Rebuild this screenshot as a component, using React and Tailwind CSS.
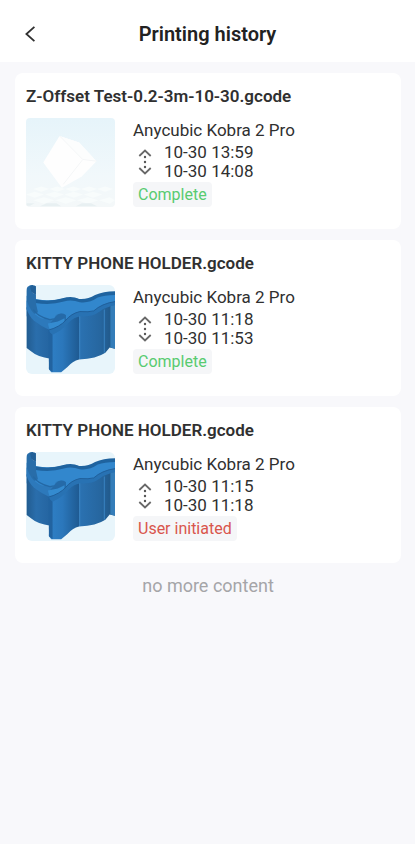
import { useId } from "react";

function CubeThumbnail() {
  const id = useId();
  return (
    <svg viewBox="18 18 268 268" className="size-[89px] shrink-0 rounded-sm" role="img" aria-label="Cube model">
      <defs>
        <linearGradient id={id} x1="0" y1="0" x2="0" y2="1">
          <stop offset="0" stopColor="#e6f4fa" />
          <stop offset="0.65" stopColor="#f1f8fb" />
          <stop offset="1" stopColor="#f4f8f9" />
        </linearGradient>
      </defs>
      <rect x="18" y="18" width="268" height="268" fill={`url(#${id})`} />
      <g fill="#f8fcfc">
        <path d="M40 232l24-8 24 8-24 8zM88 232l24-8 24 8-24 8zM136 232l24-8 24 8-24 8zM184 232l24-8 24 8-24 8zM232 232l24-8 24 8-24 8z" />
        <path d="M18 248l26-8 28 8-28 10zM76 248l28-8 28 8-28 10zM134 248l28-8 28 8-28 10zM192 248l28-8 28 8-28 10z" />
        <path d="M40 266l32-9 32 9-32 10zM106 266l32-9 32 9-32 10zM172 266l32-9 32 9-32 10zM238 266l32-9 16 9-16 10z" />
      </g>
      <g fill="#e8f0f2">
        <path d="M60 284l20-9h30l14 9zM168 284l18-9h28l18 9zM20 275h24l-14 7H18z" />
      </g>
      <path d="M119 72L178 92L230 148L186 194L126 228L70 152Z" fill="#fefefe" />
      <path d="M119 72L178 92L230 148L189 143Z" fill="#fcfdfd" />
      <path d="M119 72L189 143L230 148M189 143L130 218" fill="none" stroke="#f4f6f7" strokeWidth="3" />
    </svg>
  );
}

function HolderThumbnail() {
  const id = useId();
  return (
    <svg viewBox="18 16 268 268" className="size-[89px] shrink-0 rounded-md" role="img" aria-label="Phone holder model">
      <defs>
        <linearGradient id={`${id}left`} x1="0" y1="0" x2="1" y2="0">
          <stop offset="0" stopColor="#225c90" />
          <stop offset="0.4" stopColor="#2a6eac" />
          <stop offset="1" stopColor="#2464a0" />
        </linearGradient>
        <linearGradient id={`${id}front`} x1="0" y1="0" x2="1" y2="0">
          <stop offset="0" stopColor="#2f80c6" />
          <stop offset="0.45" stopColor="#2b77bb" />
          <stop offset="1" stopColor="#1e5a92" />
        </linearGradient>
        <linearGradient id={`${id}right`} x1="0" y1="0" x2="1" y2="0">
          <stop offset="0" stopColor="#2b72b2" />
          <stop offset="0.6" stopColor="#26669f" />
          <stop offset="1" stopColor="#1f5482" />
        </linearGradient>
      </defs>
      <rect x="18" y="16" width="268" height="268" fill="#e8f5fb" />
      <path d="M20 48L48 58Q90 66 135 56Q165 52 190 62Q215 58 240 44L286 38V90L180 130L95 160L20 110Z" fill="#3287cd" />
      <path d="M46 60Q90 68 128 56Q156 48 178 58Q204 60 226 46Q250 36 286 35V46Q254 46 234 54Q208 72 180 68Q154 58 132 66Q92 78 46 70Z" fill="#1f639f" />
      <path d="M20 16H40Q32 28 38 40L48 44V72L54 98L36 106L20 90Z" fill="#286da9" />
      <path d="M30 18Q40 14 48 20V44Q34 42 32 28Z" fill="#215f97" />
      <path d="M20 82Q32 112 54 128Q74 140 92 150V238Q52 232 34 216L20 206Z" fill={`url(#${id}left)`} />
      <path d="M20 62Q32 100 56 112Q74 122 102 120L108 106Q124 96 138 108V130L102 158L90 152Q62 140 42 124Q26 108 20 88Z" fill="#2d79bb" />
      <path d="M40 90Q54 112 90 120L102 118" fill="none" stroke="#2468a5" strokeWidth="4" />
      <path d="M106 112Q120 96 138 106V126Q122 142 98 148L92 130Z" fill="#256aa8" />
      <path d="M84 132L114 126L134 116V130L106 148H88Z" fill="#348bd0" />
      <path d="M90 156Q118 148 136 130Q154 106 178 102V240Q158 244 142 264L124 279H94L87 270Z" fill={`url(#${id}front)`} />
      <path d="M86 154L98 164V278L87 270Z" fill="#2263a0" />
      <path d="M178 100L220 98Q248 76 286 70V208L270 204L257 220Q230 238 178 240Z" fill={`url(#${id}right)`} />
      <path d="M86 152Q120 142 138 122Q154 102 180 96Q208 98 222 94Q246 72 286 66V78Q258 82 240 96Q216 114 184 110Q162 112 146 130Q126 154 98 166Z" fill="#2872b3" />
      <path d="M86 152Q120 142 138 122Q154 102 180 96Q208 98 222 94Q246 72 286 66" fill="none" stroke="#205f9b" strokeWidth="3" />
      <path d="M180 110V238" stroke="#367fc0" strokeWidth="3" />
      <path d="M254 90V220" stroke="#347cb9" strokeWidth="4" />
      <path d="M272 80L286 76V208L272 204Z" fill="#347db9" />
    </svg>
  );
}

function TimeRangeIcon() {
  return (
    <svg viewBox="0 0 14 26" className="h-[26px] w-3.5 shrink-0" fill="none" stroke="#686868" strokeWidth="1.8" aria-hidden="true">
      <path d="M1.3 7L7 1.6L12.7 7M1.3 19L7 24.4L12.7 19" />
      <g fill="#555" stroke="none">
        <circle cx="7" cy="8" r="1.2" />
        <circle cx="7" cy="13" r="1.2" />
        <circle cx="7" cy="18" r="1.2" />
      </g>
    </svg>
  );
}

const jobs = [
  { file: "Z-Offset Test-0.2-3m-10-30.gcode", start: "10-30 13:59", end: "10-30 14:08", status: "Complete", Thumbnail: CubeThumbnail },
  { file: "KITTY PHONE HOLDER.gcode", start: "10-30 11:18", end: "10-30 11:53", status: "Complete", Thumbnail: HolderThumbnail },
  { file: "KITTY PHONE HOLDER.gcode", start: "10-30 11:15", end: "10-30 11:18", status: "User initiated", Thumbnail: HolderThumbnail },
];

function JobCard({ file, start, end, status, Thumbnail }) {
  const color = status === "Complete" ? "text-[#58cb70]" : "text-[#d9554c]";
  return (
    <li className="rounded-lg bg-white px-[11px] pt-[11px] pb-[22px]">
      <h2 className="truncate text-[17px] leading-6 font-semibold">{file}</h2>
      <div className="mt-2.5 flex gap-[18px]">
        <Thumbnail />
        <div className="flex min-w-0 flex-col items-start justify-between">
          <p className="text-[17px] leading-6">Anycubic Kobra 2 Pro</p>
          <div className="flex items-center gap-3 pl-[5px] text-[17px] leading-[19px]">
            <TimeRangeIcon />
            <div>
              <p>{start}</p>
              <p>{end}</p>
            </div>
          </div>
          <span className={`rounded bg-[#f5f6f8] px-[5px] text-[16px] leading-[25px] ${color}`}>{status}</span>
        </div>
      </div>
    </li>
  );
}

export default function App() {
  return (
    <div className="min-h-screen bg-[#f8f8fb] font-[Roboto,sans-serif] text-[#303030]">
      <header className="grid h-[62px] grid-cols-[40px_1fr_40px] items-center bg-white px-2.5 pt-1.5">
        <button type="button" aria-label="Back" className="flex size-10 items-center justify-center">
          <svg viewBox="0 0 10 16" className="h-4 w-2.5" fill="none" stroke="#303030" strokeWidth="1.8" aria-hidden="true">
            <path d="M9.4 0.8L1.4 8L9.4 15.2" />
          </svg>
        </button>
        <h1 className="text-center text-[20px] leading-7 font-semibold text-[#222]">Printing history</h1>
      </header>
      <main className="pt-[11px] pr-3.5 pl-[15px]">
        <ul className="flex flex-col gap-[11px]">
          {jobs.map((job) => (
            <JobCard key={job.start} {...job} />
          ))}
        </ul>
        <p className="mt-[11px] text-center text-[18px] leading-6 text-[#a5a5a8]">no more content</p>
      </main>
    </div>
  );
}
